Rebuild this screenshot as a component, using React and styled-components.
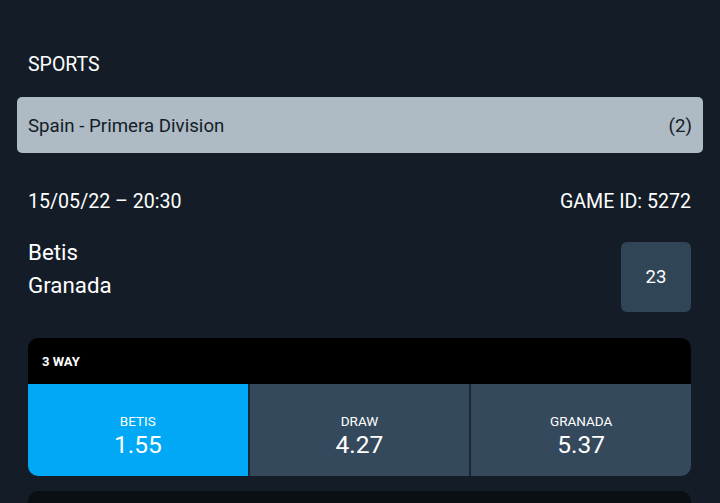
import React from "react";
import styled, { createGlobalStyle } from "styled-components";

const GlobalStyle = createGlobalStyle`
  html, body { margin: 0; padding: 0; background: #141d27; }
  body {
    font-family: Roboto, "Liberation Sans", sans-serif;
    color: #ffffff;
  }
  * { box-sizing: border-box; }
`;

const Page = styled.div`
  width: 720px;
  height: 503px;
  overflow: hidden;
  padding: 54px 29px 0 28px;
  background: #141d27;
`;

const SectionTitle = styled.div`
  font-size: 19.5px;
  line-height: 22px;
  text-transform: uppercase;
`;

const LeagueBar = styled.div`
  margin: 21px -12px 0 -11px;
  height: 56px;
  border-radius: 5px;
  background: #aebac4;
  color: #141d27;
  display: flex;
  align-items: center;
  justify-content: space-between;
  padding: 2px 11px 0 11px;
  font-size: 18.7px;
`;

const InfoRow = styled.div`
  margin-top: 38px;
  display: flex;
  justify-content: space-between;
  font-size: 19.6px;
  line-height: 22px;
`;

const MatchRow = styled.div`
  margin-top: 29px;
  display: flex;
  justify-content: space-between;
  align-items: flex-start;
`;

const Teams = styled.div`
  display: flex;
  flex-direction: column;
  gap: 13px;
  font-size: 22.3px;
  line-height: 20px;
`;

const CountBox = styled.div`
  width: 70px;
  height: 70px;
  border-radius: 6px;
  background: #304556;
  display: flex;
  align-items: center;
  justify-content: center;
  font-size: 18.5px;
`;

const Market = styled.div`
  margin-top: 26px;
  border-radius: 10px;
  overflow: hidden;
  background: #000;
`;

const MarketHeader = styled.div`
  height: 46px;
  display: flex;
  align-items: center;
  padding: 0 14px;
  font-size: 13px;
  font-weight: 700;
`;

const Outcomes = styled.div`
  display: grid;
  grid-template-columns: 1fr 1fr 1fr;
  gap: 2px;
  background: #1a2733;
`;

const Outcome = styled.div`
  height: 92px;
  background: ${(p) => (p.$active ? "#00a8f6" : "#344a5c")};
  display: flex;
  flex-direction: column;
  align-items: center;
  justify-content: center;
  padding-top: 11px;
`;

const OutcomeLabel = styled.div`
  font-size: 13.5px;
  line-height: 18px;
  text-transform: uppercase;
`;

const OutcomeOdds = styled.div`
  font-size: 24.5px;
  line-height: 30px;
`;

const NextMarket = styled.div`
  margin-top: 15px;
  height: 60px;
  border-radius: 10px;
  background: #0a0f14;
`;

const outcomes = [
  { label: "Betis", odds: "1.55", active: true },
  { label: "Draw", odds: "4.27" },
  { label: "Granada", odds: "5.37" },
];

export default function App() {
  return (
    <>
      <GlobalStyle />
      <Page>
        <SectionTitle>Sports</SectionTitle>
        <LeagueBar>
          <span>Spain - Primera Division</span>
          <span>(2)</span>
        </LeagueBar>
        <InfoRow>
          <span>15/05/22 – 20:30</span>
          <span>GAME ID: 5272</span>
        </InfoRow>
        <MatchRow>
          <Teams>
            <span>Betis</span>
            <span>Granada</span>
          </Teams>
          <CountBox>23</CountBox>
        </MatchRow>
        <Market>
          <MarketHeader>3 WAY</MarketHeader>
          <Outcomes>
            {outcomes.map((o) => (
              <Outcome key={o.label} $active={o.active}>
                <OutcomeLabel>{o.label}</OutcomeLabel>
                <OutcomeOdds>{o.odds}</OutcomeOdds>
              </Outcome>
            ))}
          </Outcomes>
        </Market>
        <NextMarket />
      </Page>
    </>
  );
}
